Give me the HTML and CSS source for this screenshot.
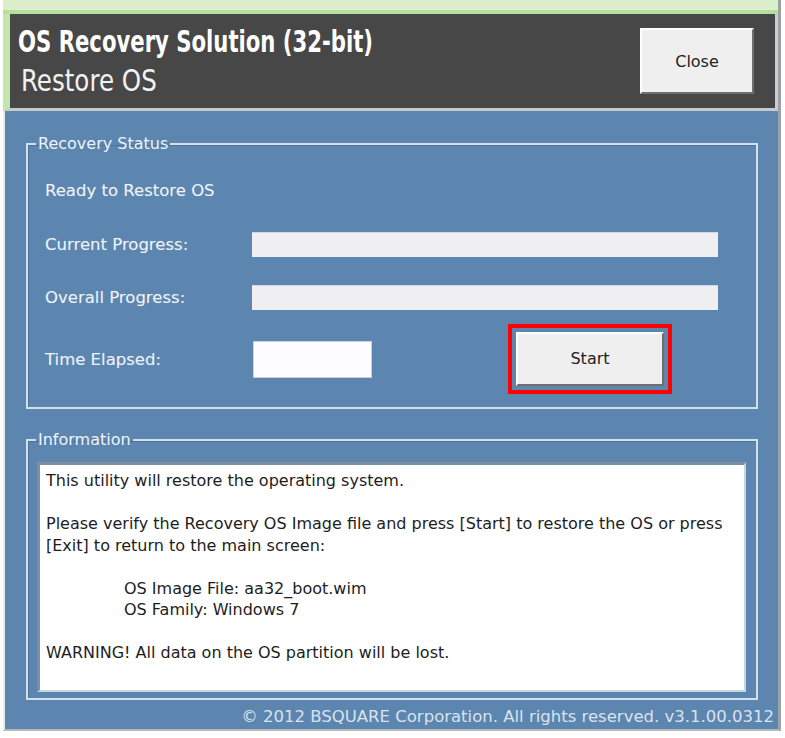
FILE: index.html
```html
<!DOCTYPE html>
<html lang="en">
<head>
    <meta charset="UTF-8">
    <title>OS Recovery Solution - Restore OS</title>
    <link rel="stylesheet" href="styles.css">
</head>
<body>

    <div class="shell">
        <div class="glow"></div>

        <!-- Cabeçalho -->
        <div class="header">
            <div class="titles">
                <h1 class="title">OS Recovery Solution (32-bit)</h1>
                <h2 class="subtitle">Restore OS</h2>
            </div>
            <button class="btn btn-close">Close</button>
        </div>

        <!-- Recovery Status -->
        <fieldset class="group group-status">
            <legend>Recovery Status</legend>
            <div class="status-grid">
                <div class="label ready">Ready to Restore OS</div>
                <div></div>

                <div class="label">Current Progress:</div>
                <div class="bar"></div>

                <div class="label">Overall Progress:</div>
                <div class="bar"></div>

                <div class="label">Time Elapsed:</div>
                <div class="time-row">
                    <div class="time-box"></div>
                    <button class="btn btn-start">Start</button>
                </div>
            </div>
        </fieldset>

        <!-- Information -->
        <fieldset class="group group-info">
            <legend>Information</legend>
            <div class="info-box">
                <p class="gap">This utility will restore the operating system.</p>
                <p class="gap">Please verify the Recovery OS Image file and press [Start] to restore the OS or press [Exit] to return to the main screen:</p>
                <p class="indent">OS Image File: aa32_boot.wim</p>
                <p class="indent gap">OS Family: Windows 7</p>
                <p>WARNING! All data on the OS partition will be lost.</p>
            </div>
        </fieldset>

        <div class="footer">© 2012 BSQUARE Corporation. All rights reserved. v3.1.00.0312</div>
    </div>

</body>
</html>
```

FILE: styles.css
```css
body { margin: 0; background: #fff; font-family: "DejaVu Sans", sans-serif; }

.shell { margin-left: 3px; width: 778px; height: 731px; box-sizing: border-box; background: #5c86b0; border-left: 2px solid #e6efe0; border-right: 3px solid #9ba1a6; border-bottom: 2px solid #b4b9bd; }
.glow { height: 10px; background: #dcefcd; border-bottom: 4px solid #b6df9c; margin-left: -2px; }

.header { display: flex; justify-content: space-between; align-items: flex-start; height: 97px; box-sizing: border-box; background: #474747; border-left: 7px solid #c2e6ab; border-right: 3px solid #c9cdd0; border-bottom: 3px solid #c6cacd; margin-left: -2px; padding: 11px 21px 0 8px; }
.title { margin: 0; color: #fff; font-family: "DejaVu Sans Condensed", "DejaVu Sans", sans-serif; font-size: 30px; font-weight: bold; line-height: 34px; white-space: nowrap; transform: scaleX(0.785); transform-origin: left center; }
.subtitle { margin: 5px 0 0 3px; color: #f2f2f2; font-family: "DejaVu Sans Condensed", "DejaVu Sans", sans-serif; font-size: 30px; font-weight: normal; line-height: 34px; transform: scaleX(0.91); transform-origin: left center; }

.btn { font-family: "DejaVu Sans", sans-serif; font-size: 16px; color: #222; background: #efefef; border: 2px solid; border-color: #fff #6f6f6f #6f6f6f #fff; cursor: pointer; }
.btn-close { width: 114px; height: 66px; margin-top: 3px; }

.group { margin: 0 20px 0 21px; padding: 0; border: 2px solid #d3e0ec; box-shadow: inset 1px 1px 0 #4c7398; }
.group legend { margin-left: 8px; padding: 0 2px; color: #eef3f8; font-size: 16px; line-height: 18px; }
.group-status { margin-top: 24px; height: 274px; box-sizing: border-box; }
.group-info { margin-top: 22px; height: 269px; box-sizing: border-box; }

.status-grid { display: grid; grid-template-columns: 207px 466px; grid-template-rows: 55px 53px 53px 71px; align-items: center; padding: 10px 0 0 17px; }
.label { color: #eef3f8; font-size: 16.5px; text-shadow: 0 0 1px #7e9dbd; }
.bar { height: 25px; background: #eeeef3; border-top: 1px solid #d0d8e2; box-sizing: border-box; }
.time-row { display: flex; align-items: center; gap: 144px; }
.time-box { width: 119px; height: 37px; margin-left: 1px; background: #fdfdff; border: 1px solid #c7d2de; box-sizing: border-box; }
.btn-start { width: 148px; height: 54px; outline: 4px solid #f00; outline-offset: 4px; margin-top: -2px; }

.info-box { margin: 13px 10px 0 9px; height: 230px; box-sizing: border-box; background: #fff; border-top: 3px solid #7d8fa2; border-left: 3px solid #7d8fa2; border-right: 2px solid #c9d5e1; border-bottom: 2px solid #c9d5e1; padding: 5px 6px 0 6px; color: #1d1d1d; font-size: 16px; line-height: 21.5px; }
.info-box p { margin: 0; }
.info-box .gap { margin-bottom: 21.5px; }
.info-box .indent { padding-left: 78px; }

.footer { text-align: right; padding: 7px 4px 0 0; color: #d9e3ee; font-size: 16.5px; line-height: 19px; white-space: nowrap; }
```
